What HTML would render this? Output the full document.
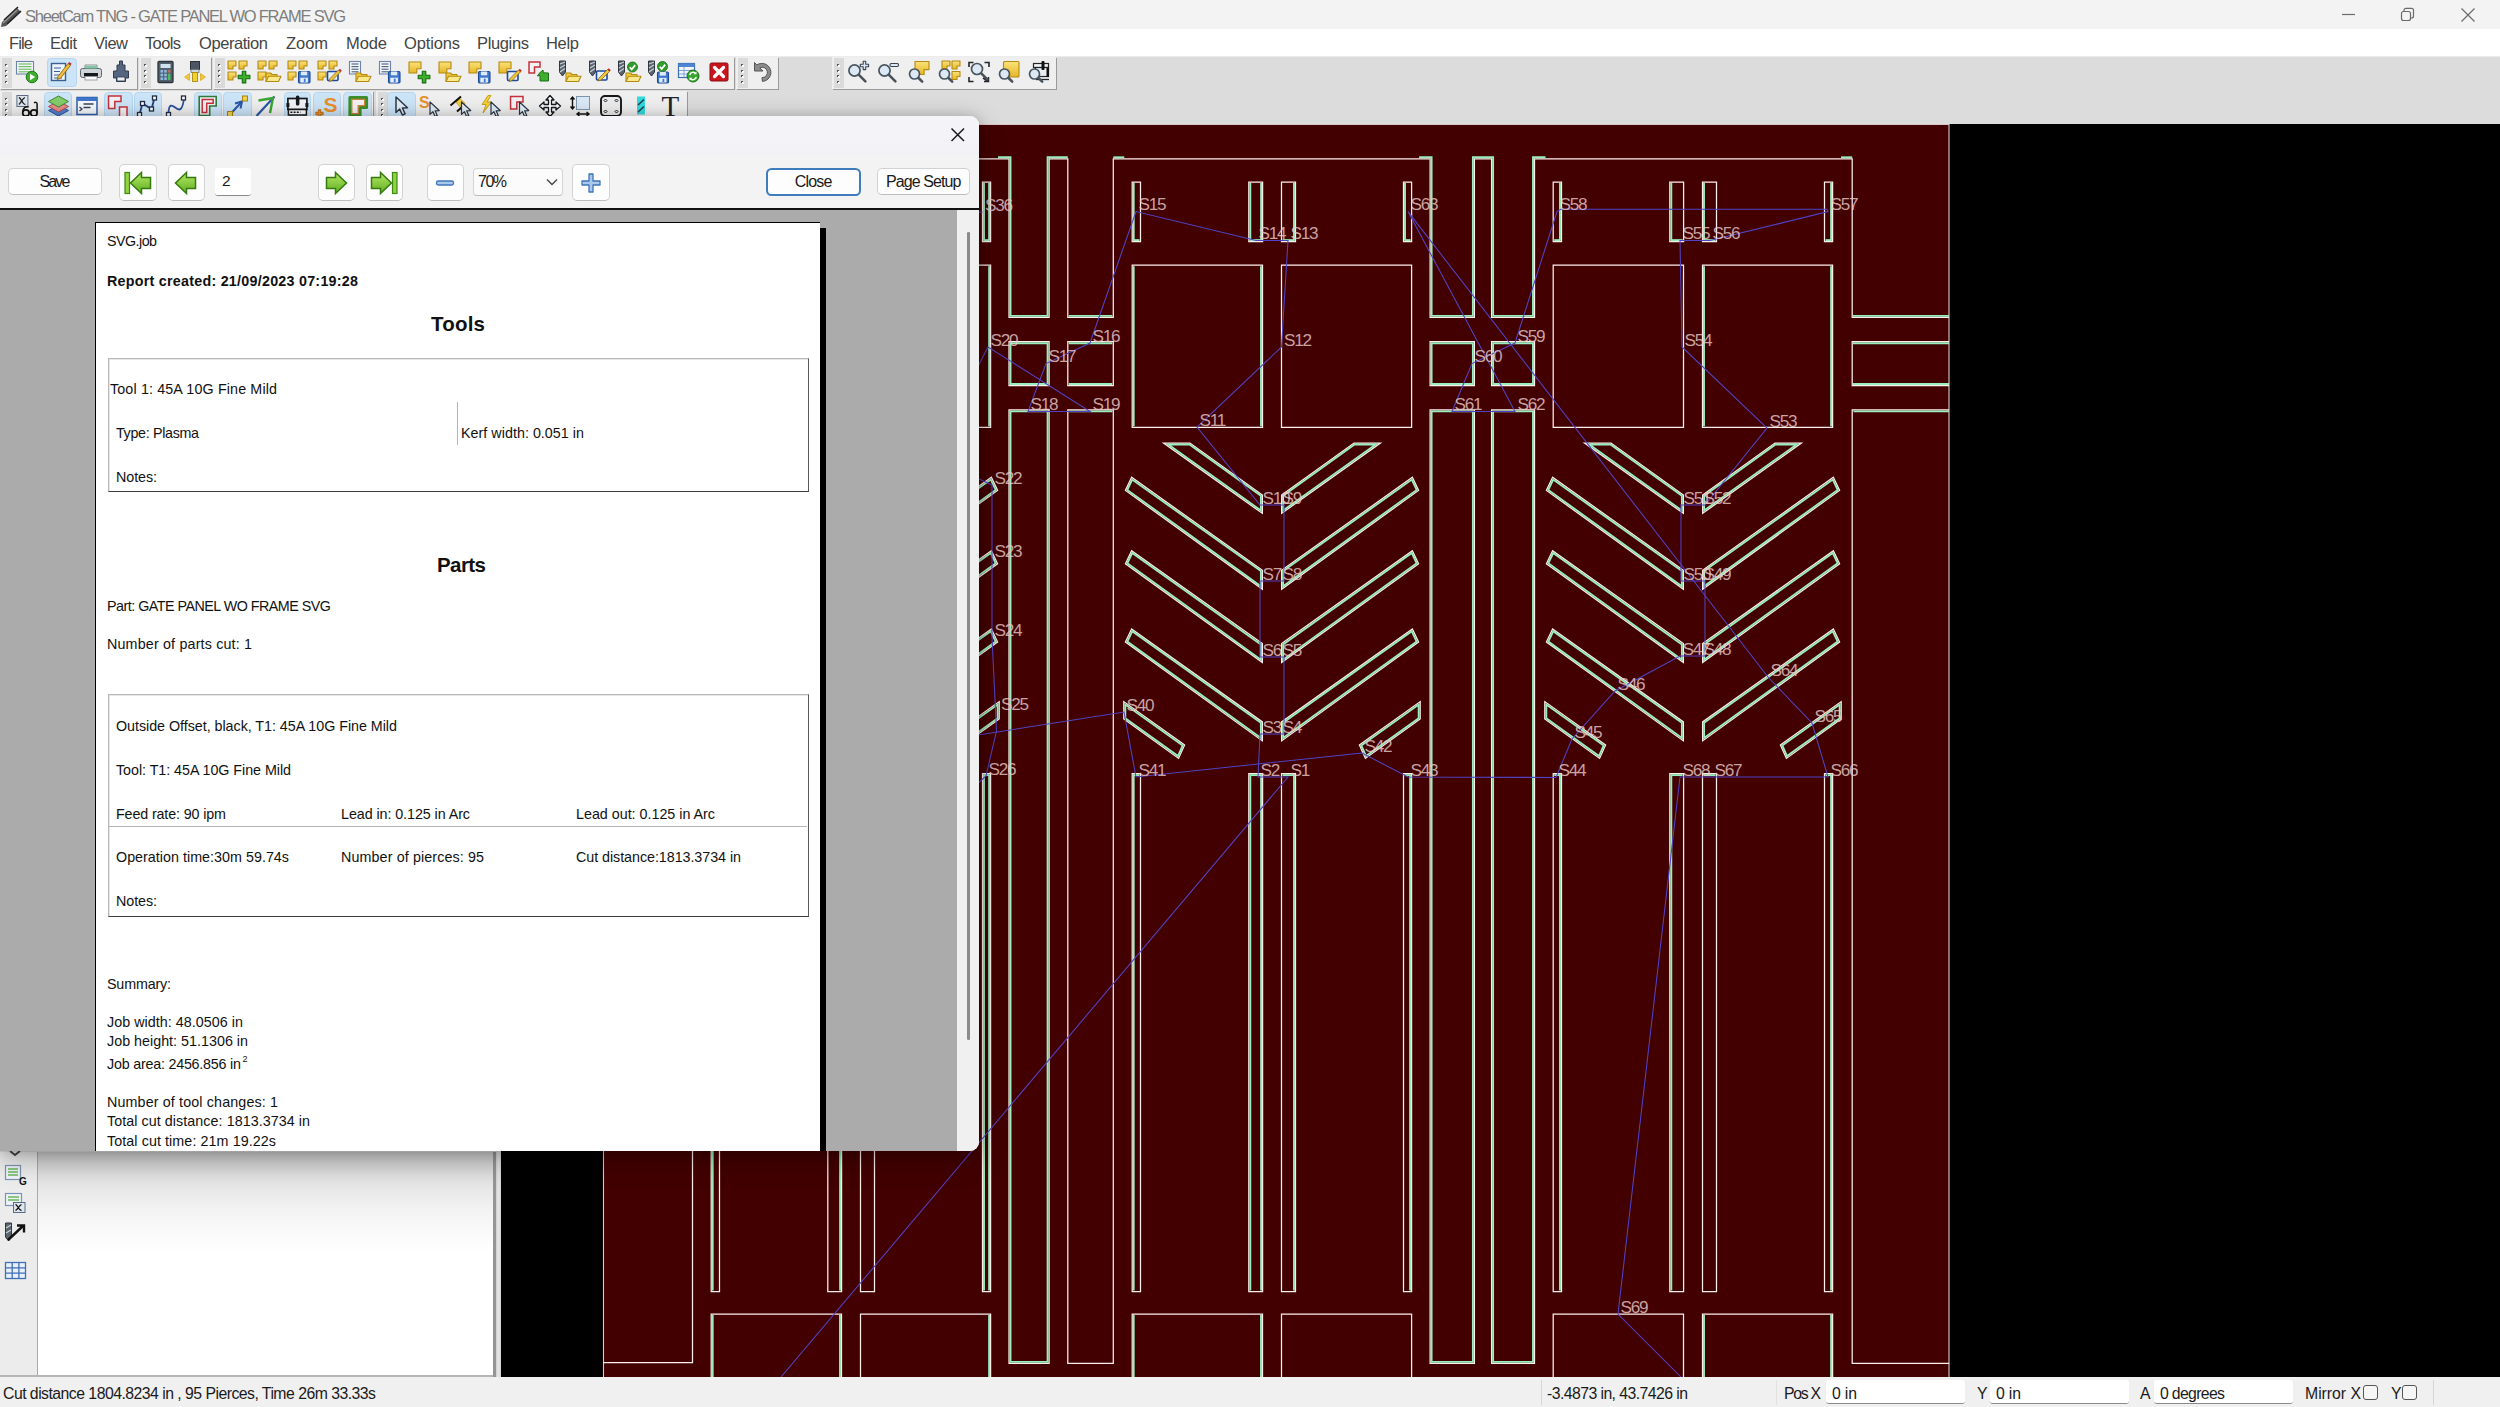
<!DOCTYPE html><html><head><meta charset="utf-8"><title>SheetCam TNG</title><style>
html,body{margin:0;padding:0;background:#dcdcdc}
body{width:2500px;height:1407px;position:relative;overflow:hidden;font-family:"Liberation Sans",sans-serif}
.t{position:absolute;white-space:pre;line-height:1}
</style></head><body>

<div style="position:absolute;left:0.00px;top:0.00px;width:2500.00px;height:29.00px;background:#f3f3f3"></div>
<svg style="position:absolute;left:0;top:3px" width="24" height="24" viewBox="0 0 24 24"><path d="M2 19 L17 5 L21 9 L6 23 L1 24 Z" fill="#555"/><path d="M4 17 L18 4 M7 21 L21 8" stroke="#222" stroke-width="1.5"/><path d="M3 20 L17 7" stroke="#999" stroke-width="1.2"/></svg>
<span class="t" style="left:25.00px;top:7.53px;font-size:16.50px;letter-spacing:-1.244px;color:#7d7d7d;">SheetCam TNG - GATE PANEL WO FRAME SVG</span>
<svg style="position:absolute;left:2330px;top:0" width="170" height="29" viewBox="0 0 170 29" fill="none" stroke="#6a6a6a" stroke-width="1.2"><path d="M12 14.5h13"/><rect x="71.5" y="11.5" width="9" height="9" rx="2"/><path d="M74 11.5v-1.2a2 2 0 0 1 2-2h5.5a2 2 0 0 1 2 2v5.7a2 2 0 0 1-2 2h-1"/><path d="M131.5 8.5l13 13M144.500 8.5l-13 13"/></svg>
<div style="position:absolute;left:0.00px;top:29.00px;width:2500.00px;height:27.00px;background:#fff"></div>
<span class="t" style="left:9.00px;top:34.63px;font-size:16.50px;letter-spacing:-0.862px;color:#444;">File</span>
<span class="t" style="left:50.00px;top:34.63px;font-size:16.50px;letter-spacing:-0.477px;color:#444;">Edit</span>
<span class="t" style="left:94.00px;top:34.63px;font-size:16.50px;letter-spacing:-0.488px;color:#444;">View</span>
<span class="t" style="left:145.00px;top:34.63px;font-size:16.50px;letter-spacing:-0.629px;color:#444;">Tools</span>
<span class="t" style="left:199.00px;top:34.63px;font-size:16.50px;letter-spacing:-0.432px;color:#444;">Operation</span>
<span class="t" style="left:286.00px;top:34.63px;font-size:16.50px;letter-spacing:-0.058px;color:#444;">Zoom</span>
<span class="t" style="left:346.00px;top:34.63px;font-size:16.50px;letter-spacing:-0.090px;color:#444;">Mode</span>
<span class="t" style="left:404.00px;top:34.63px;font-size:16.50px;letter-spacing:-0.143px;color:#444;">Options</span>
<span class="t" style="left:477.00px;top:34.63px;font-size:16.50px;letter-spacing:-0.352px;color:#444;">Plugins</span>
<span class="t" style="left:546.00px;top:34.63px;font-size:16.50px;letter-spacing:-0.311px;color:#444;">Help</span>
<div style="position:absolute;left:0.00px;top:56.00px;width:2500.00px;height:68.00px;background:#dcdcdc"></div>
<div style="position:absolute;left:0.00px;top:55.50px;width:2500.00px;height:1.50px;background:#ececec"></div>
<div style="position:absolute;left:0.00px;top:57.00px;width:137.00px;height:31.50px;background:#efefef;box-shadow:1px 1px 0 #9a9a9a"></div><div style="position:absolute;left:2.00px;top:58.00px;width:10.00px;height:29.50px;background:#dadada"></div><div style="position:absolute;left:5.00px;top:64.00px;width:2.20px;height:2.20px;background:#555"></div><div style="position:absolute;left:6.00px;top:65.00px;width:2.00px;height:2.00px;background:#fff"></div><div style="position:absolute;left:5.00px;top:69.50px;width:2.20px;height:2.20px;background:#555"></div><div style="position:absolute;left:6.00px;top:70.50px;width:2.00px;height:2.00px;background:#fff"></div><div style="position:absolute;left:5.00px;top:75.00px;width:2.20px;height:2.20px;background:#555"></div><div style="position:absolute;left:6.00px;top:76.00px;width:2.00px;height:2.00px;background:#fff"></div><div style="position:absolute;left:5.00px;top:80.50px;width:2.20px;height:2.20px;background:#555"></div><div style="position:absolute;left:6.00px;top:81.50px;width:2.00px;height:2.00px;background:#fff"></div>
<div style="position:absolute;left:139.00px;top:57.00px;width:72.00px;height:31.50px;background:#efefef;box-shadow:1px 1px 0 #9a9a9a"></div><div style="position:absolute;left:141.00px;top:58.00px;width:10.00px;height:29.50px;background:#dadada"></div><div style="position:absolute;left:144.00px;top:64.00px;width:2.20px;height:2.20px;background:#555"></div><div style="position:absolute;left:145.00px;top:65.00px;width:2.00px;height:2.00px;background:#fff"></div><div style="position:absolute;left:144.00px;top:69.50px;width:2.20px;height:2.20px;background:#555"></div><div style="position:absolute;left:145.00px;top:70.50px;width:2.00px;height:2.00px;background:#fff"></div><div style="position:absolute;left:144.00px;top:75.00px;width:2.20px;height:2.20px;background:#555"></div><div style="position:absolute;left:145.00px;top:76.00px;width:2.00px;height:2.00px;background:#fff"></div><div style="position:absolute;left:144.00px;top:80.50px;width:2.20px;height:2.20px;background:#555"></div><div style="position:absolute;left:145.00px;top:81.50px;width:2.00px;height:2.00px;background:#fff"></div>
<div style="position:absolute;left:213.00px;top:57.00px;width:521.00px;height:31.50px;background:#efefef;box-shadow:1px 1px 0 #9a9a9a"></div><div style="position:absolute;left:215.00px;top:58.00px;width:10.00px;height:29.50px;background:#dadada"></div><div style="position:absolute;left:218.00px;top:64.00px;width:2.20px;height:2.20px;background:#555"></div><div style="position:absolute;left:219.00px;top:65.00px;width:2.00px;height:2.00px;background:#fff"></div><div style="position:absolute;left:218.00px;top:69.50px;width:2.20px;height:2.20px;background:#555"></div><div style="position:absolute;left:219.00px;top:70.50px;width:2.00px;height:2.00px;background:#fff"></div><div style="position:absolute;left:218.00px;top:75.00px;width:2.20px;height:2.20px;background:#555"></div><div style="position:absolute;left:219.00px;top:76.00px;width:2.00px;height:2.00px;background:#fff"></div><div style="position:absolute;left:218.00px;top:80.50px;width:2.20px;height:2.20px;background:#555"></div><div style="position:absolute;left:219.00px;top:81.50px;width:2.00px;height:2.00px;background:#fff"></div>
<div style="position:absolute;left:736.00px;top:57.00px;width:42.00px;height:31.50px;background:#efefef;box-shadow:1px 1px 0 #9a9a9a"></div><div style="position:absolute;left:738.00px;top:58.00px;width:10.00px;height:29.50px;background:#dadada"></div><div style="position:absolute;left:741.00px;top:64.00px;width:2.20px;height:2.20px;background:#555"></div><div style="position:absolute;left:742.00px;top:65.00px;width:2.00px;height:2.00px;background:#fff"></div><div style="position:absolute;left:741.00px;top:69.50px;width:2.20px;height:2.20px;background:#555"></div><div style="position:absolute;left:742.00px;top:70.50px;width:2.00px;height:2.00px;background:#fff"></div><div style="position:absolute;left:741.00px;top:75.00px;width:2.20px;height:2.20px;background:#555"></div><div style="position:absolute;left:742.00px;top:76.00px;width:2.00px;height:2.00px;background:#fff"></div><div style="position:absolute;left:741.00px;top:80.50px;width:2.20px;height:2.20px;background:#555"></div><div style="position:absolute;left:742.00px;top:81.50px;width:2.00px;height:2.00px;background:#fff"></div>
<div style="position:absolute;left:832.00px;top:57.00px;width:223.50px;height:31.50px;background:#efefef;box-shadow:1px 1px 0 #9a9a9a"></div><div style="position:absolute;left:834.00px;top:58.00px;width:10.00px;height:29.50px;background:#dadada"></div><div style="position:absolute;left:837.00px;top:64.00px;width:2.20px;height:2.20px;background:#555"></div><div style="position:absolute;left:838.00px;top:65.00px;width:2.00px;height:2.00px;background:#fff"></div><div style="position:absolute;left:837.00px;top:69.50px;width:2.20px;height:2.20px;background:#555"></div><div style="position:absolute;left:838.00px;top:70.50px;width:2.00px;height:2.00px;background:#fff"></div><div style="position:absolute;left:837.00px;top:75.00px;width:2.20px;height:2.20px;background:#555"></div><div style="position:absolute;left:838.00px;top:76.00px;width:2.00px;height:2.00px;background:#fff"></div><div style="position:absolute;left:837.00px;top:80.50px;width:2.20px;height:2.20px;background:#555"></div><div style="position:absolute;left:838.00px;top:81.50px;width:2.00px;height:2.00px;background:#fff"></div>
<div style="position:absolute;left:0.00px;top:90.50px;width:373.00px;height:32.50px;background:#efefef;box-shadow:1px 1px 0 #9a9a9a"></div><div style="position:absolute;left:2.00px;top:91.50px;width:10.00px;height:30.50px;background:#dadada"></div><div style="position:absolute;left:5.00px;top:97.50px;width:2.20px;height:2.20px;background:#555"></div><div style="position:absolute;left:6.00px;top:98.50px;width:2.00px;height:2.00px;background:#fff"></div><div style="position:absolute;left:5.00px;top:103.00px;width:2.20px;height:2.20px;background:#555"></div><div style="position:absolute;left:6.00px;top:104.00px;width:2.00px;height:2.00px;background:#fff"></div><div style="position:absolute;left:5.00px;top:108.50px;width:2.20px;height:2.20px;background:#555"></div><div style="position:absolute;left:6.00px;top:109.50px;width:2.00px;height:2.00px;background:#fff"></div><div style="position:absolute;left:5.00px;top:114.00px;width:2.20px;height:2.20px;background:#555"></div><div style="position:absolute;left:6.00px;top:115.00px;width:2.00px;height:2.00px;background:#fff"></div>
<div style="position:absolute;left:376.00px;top:90.50px;width:310.50px;height:32.50px;background:#efefef;box-shadow:1px 1px 0 #9a9a9a"></div><div style="position:absolute;left:378.00px;top:91.50px;width:10.00px;height:30.50px;background:#dadada"></div><div style="position:absolute;left:381.00px;top:97.50px;width:2.20px;height:2.20px;background:#555"></div><div style="position:absolute;left:382.00px;top:98.50px;width:2.00px;height:2.00px;background:#fff"></div><div style="position:absolute;left:381.00px;top:103.00px;width:2.20px;height:2.20px;background:#555"></div><div style="position:absolute;left:382.00px;top:104.00px;width:2.00px;height:2.00px;background:#fff"></div><div style="position:absolute;left:381.00px;top:108.50px;width:2.20px;height:2.20px;background:#555"></div><div style="position:absolute;left:382.00px;top:109.50px;width:2.00px;height:2.00px;background:#fff"></div><div style="position:absolute;left:381.00px;top:114.00px;width:2.20px;height:2.20px;background:#555"></div><div style="position:absolute;left:382.00px;top:115.00px;width:2.00px;height:2.00px;background:#fff"></div>
<div style="position:absolute;left:47.00px;top:58.00px;width:29.70px;height:29.00px;background:#cce4f7;border:1px solid #b5d6f0;border-radius:4px;box-sizing:border-box"></div>
<div style="position:absolute;left:43.70px;top:91.50px;width:28.30px;height:30.00px;background:#cce4f7;border:1px solid #b5d6f0;border-radius:4px;box-sizing:border-box"></div>
<div style="position:absolute;left:103.60px;top:91.50px;width:29.10px;height:30.00px;background:#cce4f7;border:1px solid #b5d6f0;border-radius:4px;box-sizing:border-box"></div>
<div style="position:absolute;left:133.80px;top:91.50px;width:28.60px;height:30.00px;background:#cce4f7;border:1px solid #b5d6f0;border-radius:4px;box-sizing:border-box"></div>
<div style="position:absolute;left:193.70px;top:91.50px;width:28.00px;height:30.00px;background:#cce4f7;border:1px solid #b5d6f0;border-radius:4px;box-sizing:border-box"></div>
<div style="position:absolute;left:223.00px;top:91.50px;width:29.00px;height:30.00px;background:#cce4f7;border:1px solid #b5d6f0;border-radius:4px;box-sizing:border-box"></div>
<div style="position:absolute;left:283.60px;top:91.50px;width:27.40px;height:30.00px;background:#cce4f7;border:1px solid #b5d6f0;border-radius:4px;box-sizing:border-box"></div>
<div style="position:absolute;left:312.70px;top:91.50px;width:28.00px;height:30.00px;background:#cce4f7;border:1px solid #b5d6f0;border-radius:4px;box-sizing:border-box"></div>
<div style="position:absolute;left:343.00px;top:91.50px;width:29.00px;height:30.00px;background:#cce4f7;border:1px solid #b5d6f0;border-radius:4px;box-sizing:border-box"></div>
<div style="position:absolute;left:387.00px;top:91.50px;width:28.70px;height:30.00px;background:#cce4f7;border:1px solid #b5d6f0;border-radius:4px;box-sizing:border-box"></div>
<svg style="position:absolute;left:0;top:56px" width="1100" height="68" viewBox="0 56 1100 68"><defs><linearGradient id="yg" x1="0" y1="0" x2="0" y2="1"><stop offset="0" stop-color="#fbe27a"/><stop offset="1" stop-color="#e6b625"/></linearGradient></defs>
<g transform="translate(16.0,60)"><rect x="0.5" y="1.5" width="17.0" height="12.5" fill="#f4f7fb" stroke="#6d84a8" stroke-width="1.1"/><path d="M2.5 4.0h13.0" stroke="#6bb85a" stroke-width="1.1"/><path d="M2.5 6.6h13.0" stroke="#6bb85a" stroke-width="1.1"/><path d="M2.5 9.2h13.0" stroke="#6bb85a" stroke-width="1.1"/><path d="M2.5 11.8h13.0" stroke="#6bb85a" stroke-width="1.1"/><circle cx="16" cy="17" r="5.800" fill="#3fae2f" stroke="#1f7a18" stroke-width="1"/><path d="M14 13.800v6.400l5.200-3.200z" fill="#fff"/></g>
<g transform="translate(49.0,60)"><rect x="2.500" y="3.500" width="14" height="17" fill="#eef4fb" stroke="#3b5f8f" stroke-width="1.4"/><path d="M5 8h7M5 11.500h6M5 15h5M5 18h8" stroke="#3b5f8f" stroke-width="1.2"/><path d="M9 16.500L19 3.500l2.500 1.800L11.500 18.300l-3.200 1.200z" fill="#f1bf3a" stroke="#8a6512" stroke-width=".9"/><path d="M19 3.500l1.200-1.600 2.500 1.800-1.200 1.600z" fill="#c62a30"/></g>
<g transform="translate(79.0,60)"><path d="M6 9V5h12v4" fill="#eef3ee" stroke="#8a9096" stroke-width="1"/><rect x="1.500" y="8.500" width="21" height="9" rx="2" fill="#cfd4d8" stroke="#5d646b" stroke-width="1"/><rect x="6" y="6" width="12" height="2.500" fill="#7fc4a4"/><rect x="5" y="13" width="14" height="3.500" fill="#15181b"/><rect x="6" y="16.500" width="12" height="3.500" fill="#fafafa" stroke="#8a9096" stroke-width=".8"/></g>
<g transform="translate(109.0,60)"><path d="M10.500 1h3v4h2.500v6h3.500v7h-3v3.500h-9V18h-3v-7h3.500V5h2.500z" fill="#56657f" stroke="#2f3b50" stroke-width="1" stroke-linejoin="round"/><rect x="8" y="17" width="8" height="4" fill="#e9edf3" stroke="#2f3b50" stroke-width=".8"/></g>
<g transform="translate(153.5,60)"><rect x="4.500" y="1.500" width="15" height="21" rx="1" fill="#51606d" stroke="#2b343c" stroke-width="1.3"/><rect x="7" y="4" width="10" height="4" fill="#cfe0ee"/><g fill="#8db9e6"><rect x="7" y="10" width="2.600" height="2.600"/><rect x="10.700" y="10" width="2.600" height="2.600"/><rect x="7" y="13.700" width="2.600" height="2.600"/><rect x="10.700" y="13.700" width="2.600" height="2.600"/><rect x="7" y="17.400" width="2.600" height="2.600"/><rect x="10.700" y="17.400" width="2.600" height="2.600"/></g><rect x="14.400" y="10" width="2.600" height="2.600" fill="#c86a5a"/><rect x="14.400" y="13.700" width="2.600" height="6.300" fill="#4fb85a"/></g>
<g transform="translate(183.0,60)"><rect x="7.500" y="1.500" width="9" height="8" fill="#4d5763" stroke="#2b333b" stroke-width="1"/><rect x="8" y="9.500" width="8" height="3" fill="#cfd6dd" stroke="#6b747d" stroke-width=".8"/><rect x="9.500" y="12.500" width="5" height="9" fill="#f3d22e" stroke="#a98a10" stroke-width=".9"/><path d="M6.500 13.500v7l-5-3.500zM17.500 13.500v7l5-3.500z" fill="#f1c83a" stroke="#d9a91c" stroke-width=".8"/></g>
<g transform="translate(227.0,60)"><path d="M1.0 1.0h8.0v5.0h-3.0v3.0h-5.0z" fill="url(#yg)" stroke="#b38a12" stroke-width="1.1" stroke-linejoin="round"/><path d="M12.0 1.0h8.0v5.0h-3.0v3.0h-5.0z" fill="url(#yg)" stroke="#b38a12" stroke-width="1.1" stroke-linejoin="round"/><path d="M1.0 12.0h8.0v5.0h-3.0v3.0h-5.0z" fill="url(#yg)" stroke="#b38a12" stroke-width="1.1" stroke-linejoin="round"/><path d="M15.3 11.2h3.5v4.1h4.1v3.5h-4.1v4.1h-3.5v-4.1h-4.1v-3.5h4.1z" fill="#3cb02a" stroke="#176b10" stroke-width="1.1" stroke-linejoin="round"/></g>
<g transform="translate(257.0,60)"><path d="M1.0 1.0h8.0v5.0h-3.0v3.0h-5.0z" fill="url(#yg)" stroke="#b38a12" stroke-width="1.1" stroke-linejoin="round"/><path d="M12.0 1.0h8.0v5.0h-3.0v3.0h-5.0z" fill="url(#yg)" stroke="#b38a12" stroke-width="1.1" stroke-linejoin="round"/><path d="M1.0 12.0h8.0v5.0h-3.0v3.0h-5.0z" fill="url(#yg)" stroke="#b38a12" stroke-width="1.1" stroke-linejoin="round"/><g transform="translate(8.5,11.5)"><path d="M0.500 10.0V1.500h4.500l1.500 1.500h5.0v2.500" fill="#f1c93c" stroke="#b38a12" stroke-width="1.1" stroke-linejoin="round"/><path d="M0.500 10.0L3 4.8h12.5l-2.500 5.2z" fill="#fbe88a" stroke="#b38a12" stroke-width="1.1" stroke-linejoin="round"/></g></g>
<g transform="translate(287.0,60)"><path d="M1.0 1.0h8.0v5.0h-3.0v3.0h-5.0z" fill="url(#yg)" stroke="#b38a12" stroke-width="1.1" stroke-linejoin="round"/><path d="M12.0 1.0h8.0v5.0h-3.0v3.0h-5.0z" fill="url(#yg)" stroke="#b38a12" stroke-width="1.1" stroke-linejoin="round"/><path d="M1.0 12.0h8.0v5.0h-3.0v3.0h-5.0z" fill="url(#yg)" stroke="#b38a12" stroke-width="1.1" stroke-linejoin="round"/><g transform="translate(11.0,11.0)"><rect x="0.500" y="0.500" width="11.5" height="11.5" rx="1.2" fill="#3e78cf" stroke="#1d4a96" stroke-width="1.1"/><rect x="2.9" y="0.500" width="6.3" height="3.8" fill="#dfe9f7"/><rect x="2.3" y="6.7" width="7.6" height="4.8" fill="#e8eef8"/><rect x="5.8" y="7.6" width="1.8" height="3.4" fill="#3e78cf"/></g></g>
<g transform="translate(317.0,60)"><path d="M1.0 1.0h8.0v5.0h-3.0v3.0h-5.0z" fill="url(#yg)" stroke="#b38a12" stroke-width="1.1" stroke-linejoin="round"/><path d="M12.0 1.0h8.0v5.0h-3.0v3.0h-5.0z" fill="url(#yg)" stroke="#b38a12" stroke-width="1.1" stroke-linejoin="round"/><path d="M1.0 12.0h8.0v5.0h-3.0v3.0h-5.0z" fill="url(#yg)" stroke="#b38a12" stroke-width="1.1" stroke-linejoin="round"/><g transform="translate(10.0,8.5)"><rect x="0.500" y="3" width="10.5" height="9.0" rx="1" fill="#e8f0fb" stroke="#1d4a96" stroke-width="1.6"/><path d="M3 10.0L11.5 1.500l2 2L5 12.0l-2.800 1z" fill="#f2c23a" stroke="#8a6a10" stroke-width=".8"/><path d="M11.5 1.500l1.300-1.300 2 2-1.300 1.300z" fill="#c8242b"/></g></g>
<g transform="translate(347.0,60)"><rect x="2.5" y="1.5" width="11.0" height="12.5" fill="#f4f7fb" stroke="#6d84a8" stroke-width="1.1"/><path d="M4.5 4.0h7.0" stroke="#4a5d7a" stroke-width="1.1"/><path d="M4.5 6.6h7.0" stroke="#4a5d7a" stroke-width="1.1"/><path d="M4.5 9.2h7.0" stroke="#4a5d7a" stroke-width="1.1"/><path d="M4.5 11.8h7.0" stroke="#4a5d7a" stroke-width="1.1"/><g transform="translate(8.5,11.5)"><path d="M0.500 10.0V1.500h4.500l1.500 1.500h5.0v2.500" fill="#f1c93c" stroke="#b38a12" stroke-width="1.1" stroke-linejoin="round"/><path d="M0.500 10.0L3 4.8h12.5l-2.500 5.2z" fill="#fbe88a" stroke="#b38a12" stroke-width="1.1" stroke-linejoin="round"/></g></g>
<g transform="translate(377.0,60)"><rect x="2.5" y="1.5" width="11.0" height="12.5" fill="#f4f7fb" stroke="#6d84a8" stroke-width="1.1"/><path d="M4.5 4.0h7.0" stroke="#4a5d7a" stroke-width="1.1"/><path d="M4.5 6.6h7.0" stroke="#4a5d7a" stroke-width="1.1"/><path d="M4.5 9.2h7.0" stroke="#4a5d7a" stroke-width="1.1"/><path d="M4.5 11.8h7.0" stroke="#4a5d7a" stroke-width="1.1"/><g transform="translate(11.0,11.0)"><rect x="0.500" y="0.500" width="11.5" height="11.5" rx="1.2" fill="#3e78cf" stroke="#1d4a96" stroke-width="1.1"/><rect x="2.9" y="0.500" width="6.3" height="3.8" fill="#dfe9f7"/><rect x="2.3" y="6.7" width="7.6" height="4.8" fill="#e8eef8"/><rect x="5.8" y="7.6" width="1.8" height="3.4" fill="#3e78cf"/></g></g>
<g transform="translate(407.0,60)"><path d="M2.0 2.0h12.0v6.8h-4.2v4.2h-7.8z" fill="url(#yg)" stroke="#b38a12" stroke-width="1.1" stroke-linejoin="round"/><path d="M15.3 11.2h3.5v4.1h4.1v3.5h-4.1v4.1h-3.5v-4.1h-4.1v-3.5h4.1z" fill="#3cb02a" stroke="#176b10" stroke-width="1.1" stroke-linejoin="round"/></g>
<g transform="translate(437.0,60)"><path d="M2.0 2.0h12.0v6.8h-4.2v4.2h-7.8z" fill="url(#yg)" stroke="#b38a12" stroke-width="1.1" stroke-linejoin="round"/><g transform="translate(8.5,11.5)"><path d="M0.500 10.0V1.500h4.500l1.500 1.500h5.0v2.500" fill="#f1c93c" stroke="#b38a12" stroke-width="1.1" stroke-linejoin="round"/><path d="M0.500 10.0L3 4.8h12.5l-2.500 5.2z" fill="#fbe88a" stroke="#b38a12" stroke-width="1.1" stroke-linejoin="round"/></g></g>
<g transform="translate(467.0,60)"><path d="M2.0 2.0h12.0v6.8h-4.2v4.2h-7.8z" fill="url(#yg)" stroke="#b38a12" stroke-width="1.1" stroke-linejoin="round"/><g transform="translate(11.0,11.0)"><rect x="0.500" y="0.500" width="11.5" height="11.5" rx="1.2" fill="#3e78cf" stroke="#1d4a96" stroke-width="1.1"/><rect x="2.9" y="0.500" width="6.3" height="3.8" fill="#dfe9f7"/><rect x="2.3" y="6.7" width="7.6" height="4.8" fill="#e8eef8"/><rect x="5.8" y="7.6" width="1.8" height="3.4" fill="#3e78cf"/></g></g>
<g transform="translate(497.0,60)"><path d="M2.0 2.0h12.0v6.8h-4.2v4.2h-7.8z" fill="url(#yg)" stroke="#b38a12" stroke-width="1.1" stroke-linejoin="round"/><g transform="translate(10.0,8.5)"><rect x="0.500" y="3" width="10.5" height="9.0" rx="1" fill="#e8f0fb" stroke="#1d4a96" stroke-width="1.6"/><path d="M3 10.0L11.5 1.500l2 2L5 12.0l-2.800 1z" fill="#f2c23a" stroke="#8a6a10" stroke-width=".8"/><path d="M11.5 1.500l1.300-1.300 2 2-1.300 1.300z" fill="#c8242b"/></g></g>
<g transform="translate(527.0,60)"><path d="M2.0 2.0h11.0v5.0h-5.5v6.1h-5.5z" fill="#f4f1f5" stroke="#c5323a" stroke-width="1.5" stroke-linejoin="miter"/><path d="M12 13.500l4-3.500.3 2.800 5.200.2v8h-8.500v-5.500l-2.500.5z" fill="#3fae2f" stroke="#1c6e16" stroke-width="1" stroke-linejoin="round"/></g>
<g transform="translate(557.0,60)"><g transform="translate(2.0,1.0)"><path d="M0.500 0v11l3 4 3-4V0z" fill="#5b6570" stroke="#2d343c" stroke-width="1"/><path d="M1 3l5-2M1 7l5-3M1 11l5-3.500" stroke="#c9d2da" stroke-width="1.2"/></g><g transform="translate(8.5,11.5)"><path d="M0.500 10.0V1.500h4.500l1.500 1.500h5.0v2.500" fill="#f1c93c" stroke="#b38a12" stroke-width="1.1" stroke-linejoin="round"/><path d="M0.500 10.0L3 4.8h12.5l-2.500 5.2z" fill="#fbe88a" stroke="#b38a12" stroke-width="1.1" stroke-linejoin="round"/></g></g>
<g transform="translate(587.0,60)"><g transform="translate(2.0,1.0)"><path d="M0.500 0v11l3 4 3-4V0z" fill="#5b6570" stroke="#2d343c" stroke-width="1"/><path d="M1 3l5-2M1 7l5-3M1 11l5-3.500" stroke="#c9d2da" stroke-width="1.2"/></g><g transform="translate(9.0,8.0)"><rect x="0.500" y="3" width="10.5" height="9.0" rx="1" fill="#e8f0fb" stroke="#1d4a96" stroke-width="1.6"/><path d="M3 10.0L11.5 1.500l2 2L5 12.0l-2.800 1z" fill="#f2c23a" stroke="#8a6a10" stroke-width=".8"/><path d="M11.5 1.500l1.300-1.300 2 2-1.300 1.300z" fill="#c8242b"/></g></g>
<g transform="translate(617.0,60)"><g transform="translate(1.0,1.0)"><path d="M0.500 0v11l3 4 3-4V0z" fill="#5b6570" stroke="#2d343c" stroke-width="1"/><path d="M1 3l5-2M1 7l5-3M1 11l5-3.500" stroke="#c9d2da" stroke-width="1.2"/></g><g transform="translate(8.5,11.5)"><path d="M0.500 10.0V1.500h4.500l1.500 1.500h5.0v2.500" fill="#f1c93c" stroke="#b38a12" stroke-width="1.1" stroke-linejoin="round"/><path d="M0.500 10.0L3 4.8h12.5l-2.500 5.2z" fill="#fbe88a" stroke="#b38a12" stroke-width="1.1" stroke-linejoin="round"/></g><circle cx="15.5" cy="7.0" r="5.0" fill="#2f9e2a" stroke="#166a14" stroke-width=".8"/><path d="M12.7 7.2l2 2.200 3.500-4.300" fill="none" stroke="#fff" stroke-width="1.7"/></g>
<g transform="translate(647.0,60)"><g transform="translate(1.0,1.0)"><path d="M0.500 0v11l3 4 3-4V0z" fill="#5b6570" stroke="#2d343c" stroke-width="1"/><path d="M1 3l5-2M1 7l5-3M1 11l5-3.500" stroke="#c9d2da" stroke-width="1.2"/></g><g transform="translate(10.0,11.5)"><rect x="0.500" y="0.500" width="11.0" height="11.0" rx="1.2" fill="#3e78cf" stroke="#1d4a96" stroke-width="1.1"/><rect x="2.8" y="0.500" width="6.1" height="3.6" fill="#dfe9f7"/><rect x="2.2" y="6.4" width="7.3" height="4.6" fill="#e8eef8"/><rect x="5.5" y="7.3" width="1.8" height="3.3" fill="#3e78cf"/></g><circle cx="15.5" cy="6.5" r="5.0" fill="#2f9e2a" stroke="#166a14" stroke-width=".8"/><path d="M12.7 6.7l2 2.200 3.500-4.300" fill="none" stroke="#fff" stroke-width="1.7"/></g>
<g transform="translate(677.0,60)"><rect x="1.500" y="3.500" width="16" height="14" fill="#f2f6fb" stroke="#3f6fb5" stroke-width="1.2"/><rect x="1.500" y="3.500" width="16" height="3.500" fill="#4f86d4"/><path d="M2 10.500h15M2 14h15M7 7v10" stroke="#7fa3d8" stroke-width="1"/><circle cx="16" cy="16" r="6" fill="#35a52c" stroke="#176a12" stroke-width=".9"/><path d="M12.800 15a3.300 3.300 0 0 1 5.800-1.500M19.200 17a3.300 3.300 0 0 1-5.800 1.500" fill="none" stroke="#fff" stroke-width="1.500"/><path d="M19.500 11.500v2.800h-2.800zM12.500 20.500v-2.800h2.800z" fill="#fff"/></g>
<g transform="translate(707.0,60)"><rect x="3" y="3" width="18" height="18" rx="1.500" fill="#c9161d" stroke="#8e0c12" stroke-width="1"/><path d="M7.500 7.500l9 9M16.500 7.500l-9 9" stroke="#fff" stroke-width="3.200" stroke-linecap="round"/></g>
<g transform="translate(751.0,60)"><path d="M3.500 2.500v8.500h8.500l-3.200-3.200a5.200 5.200 0 1 1 2.200 9.800l.4 3.800a9 9 0 1 0-5.600-16.400z" fill="#8b8b8b" stroke="#555" stroke-width="1" stroke-linejoin="round"/></g>
<g transform="translate(846.0,60)"><path d="M12.4 14.4l7.0 7.0" stroke="#4a535c" stroke-width="2.600" stroke-linecap="round"/><circle cx="8.5" cy="10.5" r="5.6" fill="#dce9f4" stroke="#4a545e" stroke-width="1.7"/><path d="M17.2 1.3h2.5v2.9h2.9v2.5h-2.9v2.9h-2.5v-2.9h-2.9v-2.5h2.9z" fill="#dce9f4" stroke="#3a4550" stroke-width="1.1" stroke-linejoin="round"/></g>
<g transform="translate(876.0,60)"><path d="M12.4 14.4l7.0 7.0" stroke="#4a535c" stroke-width="2.600" stroke-linecap="round"/><circle cx="8.5" cy="10.5" r="5.6" fill="#dce9f4" stroke="#4a545e" stroke-width="1.7"/><rect x="14" y="3.500" width="8.500" height="3" rx="1.200" fill="#dce9f4" stroke="#3a4550" stroke-width="1.100"/></g>
<g transform="translate(907.0,60)"><path d="M8.0 1.5h14.0v8.1h-4.9v4.9h-9.1z" fill="url(#yg)" stroke="#b38a12" stroke-width="1.1" stroke-linejoin="round"/><path d="M11.0 17.5l4.2 4.2" stroke="#4a535c" stroke-width="2.600" stroke-linecap="round"/><circle cx="7.5" cy="14.0" r="5.0" fill="#dce9f4" stroke="#4a545e" stroke-width="1.7"/></g>
<g transform="translate(937.0,60)"><path d="M5.0 1.0h8.0v5.0h-3.0v3.0h-5.0z" fill="url(#yg)" stroke="#b38a12" stroke-width="1.1" stroke-linejoin="round"/><path d="M15.0 1.0h8.0v5.0h-3.0v3.0h-5.0z" fill="url(#yg)" stroke="#b38a12" stroke-width="1.1" stroke-linejoin="round"/><path d="M15.0 11.5h8.0v5.0h-3.0v3.0h-5.0z" fill="url(#yg)" stroke="#b38a12" stroke-width="1.1" stroke-linejoin="round"/><path d="M11.0 17.5l4.2 4.2" stroke="#4a535c" stroke-width="2.600" stroke-linecap="round"/><circle cx="7.5" cy="14.0" r="5.0" fill="#dce9f4" stroke="#4a545e" stroke-width="1.7"/></g>
<g transform="translate(967.0,60)"><path d="M2 7V2.500h4.500M17.500 2.500H22V7M2 17v4.500h4.500" fill="none" stroke="#20262c" stroke-width="1.600"/><path d="M16 18l5.500 3.500M21.500 17v4.500H17" fill="none" stroke="#20262c" stroke-width="1.500"/><path d="M13.8 12.8l6.5 6.5" stroke="#4a535c" stroke-width="2.600" stroke-linecap="round"/><circle cx="10.0" cy="9.0" r="5.5" fill="#dce9f4" stroke="#4a545e" stroke-width="1.7"/></g>
<g transform="translate(997.0,60)"><rect x="6.5" y="1.5" width="15.5" height="15.5" rx="1" fill="url(#yg)" stroke="#b38a12" stroke-width="1.1"/><path d="M11.0 17.5l4.2 4.2" stroke="#4a535c" stroke-width="2.600" stroke-linecap="round"/><circle cx="7.5" cy="14.0" r="5.0" fill="#dce9f4" stroke="#4a545e" stroke-width="1.7"/></g>
<g transform="translate(1027.0,60)"><rect x="6.500" y="3.500" width="15" height="4" fill="#f2f4f6" stroke="#20262c" stroke-width="1.200"/><rect x="8.500" y="7.500" width="13" height="9" fill="#e9edf1" stroke="#20262c" stroke-width="1.200"/><rect x="19.500" y="8" width="2.500" height="9" fill="#111"/><rect x="14.500" y="1" width="3" height="9" rx="1" fill="#111"/><path d="M9 19.500h13" stroke="#20262c" stroke-width="1.300"/><path d="M11.0 17.5l4.2 4.2" stroke="#4a535c" stroke-width="2.600" stroke-linecap="round"/><circle cx="7.5" cy="14.0" r="5.0" fill="#dce9f4" stroke="#4a545e" stroke-width="1.7"/></g>
<g transform="translate(15.4,94)"><rect x="1.500" y="1.500" width="11" height="11" fill="#dfe7f1" stroke="#5b6c84" stroke-width="1"/><path d="M3.500 3.500c2 0 3.500 7 6.500 7M9.500 3.500c-2.500 1-4 5.500-6 7" fill="none" stroke="#222" stroke-width="1.300"/><circle cx="10.500" cy="19" r="3.200" fill="none" stroke="#111" stroke-width="1.700"/><circle cx="18.500" cy="19" r="3.200" fill="none" stroke="#111" stroke-width="1.700"/><path d="M13.500 18.500h2M21.700 19V10c0-2-2-2-3-1M7.300 18c0-4 3-6 6-5" fill="none" stroke="#111" stroke-width="1.500"/></g>
<g transform="translate(46.5,94)"><path d="M12 11l10 5.500-10 5.500-10-5.500z" fill="#4f7fd0" stroke="#2a4f97" stroke-width="1"/><path d="M12 7l10 5.500-10 5.500-10-5.500z" fill="#e98a8a" stroke="#b04a4a" stroke-width="1"/><path d="M12 2l10 5.500-10 5.500-10-5.500z" fill="#84cc6c" stroke="#3d8a2e" stroke-width="1"/></g>
<g transform="translate(75.0,94)"><rect x="2" y="3.500" width="20" height="17" fill="#f4f7fb" stroke="#2f5fae" stroke-width="1.500"/><rect x="2" y="3.500" width="20" height="3.500" fill="#3f76cc"/><path d="M8.500 10h10M8.500 13.500h7" stroke="#39455a" stroke-width="1.400"/><path d="M4.500 13l2.500 2-2.500 2" fill="none" stroke="#39455a" stroke-width="1.300"/></g>
<g transform="translate(106.0,94)"><path d="M2.5 2.0h12.5v5.6h-6.2v6.9h-6.2z" fill="#f4f1f5" stroke="#c5323a" stroke-width="1.5" stroke-linejoin="miter"/><rect x="13.500" y="13" width="7.500" height="10" fill="#f4f1f5" stroke="#c5323a" stroke-width="1.500"/></g>
<g transform="translate(136.0,94)"><path d="M3.500 20.500L6.500 9.500l9 5.500 3-11" fill="none" stroke="#23407a" stroke-width="1.800"/><g fill="#fff" stroke="#1f2c44" stroke-width="1.300"><rect x="1.500" y="18.500" width="4" height="4"/><rect x="4.500" y="7.500" width="4" height="4"/><rect x="13.500" y="13" width="4" height="4"/><rect x="16.500" y="2" width="4" height="4"/></g></g>
<g transform="translate(165.0,94)"><path d="M3.500 20.500c0-14 5-8 8-6s6 2 7.500-10" fill="none" stroke="#2c4f9a" stroke-width="1.800"/><g fill="#fff" stroke="#1f2c44" stroke-width="1.300"><rect x="1.500" y="18.500" width="4" height="4"/><rect x="16.500" y="2" width="4" height="4"/></g></g>
<g transform="translate(195.7,94)"><path d="M3.500 2.500h17v9.500h-6.500v9.500h-10.500z" fill="#eef1f5" stroke="#2f7a3a" stroke-width="1.600"/><path d="M6.500 5.500h11v3.800h-6.500v9.200h-4.500z" fill="#f6f2f4" stroke="#c5323a" stroke-width="1.500"/></g>
<g transform="translate(226.0,94)"><path d="M4.500 20L16 7.500" stroke="#2856a8" stroke-width="2"/><path d="M9 9.500l7-2-1.500 7" fill="none" stroke="#2856a8" stroke-width="2"/><rect x="1.500" y="17.500" width="5" height="5" fill="#f4d24a" stroke="#a78412" stroke-width="1"/><rect x="16.500" y="2" width="5" height="5" fill="#f4d24a" stroke="#a78412" stroke-width="1"/></g>
<g transform="translate(254.5,94)"><path d="M2 22L20 2.500" stroke="#2856a8" stroke-width="2.200"/><path d="M4 6.500l14.500-2.500-3 15" fill="none" stroke="#3aa52e" stroke-width="2.400"/></g>
<g transform="translate(285.4,94)"><rect x="2.500" y="4.500" width="19" height="11" fill="#eef2f6" stroke="#15181c" stroke-width="1.700"/><rect x="3" y="15.500" width="18" height="5.500" fill="#fff" stroke="#15181c" stroke-width="1.500"/><path d="M5 18.300h10" stroke="#15181c" stroke-width="1.500" stroke-dasharray="2 1.200"/><rect x="10.500" y="1.500" width="3.500" height="10" rx="1.500" fill="#15181c"/><path d="M2.500 9v4M21.500 9v4" stroke="#15181c" stroke-width="3"/><path d="M4 22.500h3M17 22.500h3" stroke="#15181c" stroke-width="1.600"/></g>
<g transform="translate(315.0,94)"><text x="8.500" y="18" font-family="Liberation Sans,sans-serif" font-weight="bold" font-size="21" fill="#e8902c">S</text><path d="M3.4 15.9h2.2v2.5h2.5v2.2h-2.5v2.5h-2.2v-2.5h-2.5v-2.2h2.5z" fill="#e8902c" stroke="#c6741a" stroke-width="1.1" stroke-linejoin="round"/></g>
<g transform="translate(346.0,94)"><path d="M4 3.500h16.500v10h-6.500v8h-10z" fill="#f4f2f6" stroke="#3c8f2a" stroke-width="3.200" stroke-linejoin="round"/><path d="M5.800 5.300h12.900v6.400h-6.500v8h-6.400z" fill="none" stroke="#c9823a" stroke-width="1.300"/></g>
<g transform="translate(390.0,94)"><path transform="translate(6.0,3.0) scale(1.15)" d="M0 0v13.5l3.200-3 2.300 5.200 2.400-1.100-2.300-5 4.400-.3z" fill="#e3ebf4" stroke="#2a3848" stroke-width="1.3" stroke-linejoin="round"/></g>
<g transform="translate(419.0,94)"><text x="0" y="13.500" font-family="Liberation Sans,sans-serif" font-weight="bold" font-size="16" fill="#e8902c">S</text><path transform="translate(11.0,8.0) scale(0.92)" d="M0 0v13.5l3.200-3 2.300 5.200 2.400-1.100-2.300-5 4.400-.3z" fill="#e3ebf4" stroke="#2a3848" stroke-width="1.3" stroke-linejoin="round"/></g>
<g transform="translate(449.0,94)"><path d="M7 8l4-3.500 5 5-4.500 4z" fill="#f1cf3c" stroke="#b39412" stroke-width=".8"/><path d="M1.500 11.500L12 2.500M8 17.500l8-7" stroke="#111" stroke-width="2"/><path transform="translate(12.5,8.0) scale(0.92)" d="M0 0v13.5l3.200-3 2.300 5.200 2.400-1.100-2.300-5 4.400-.3z" fill="#e3ebf4" stroke="#2a3848" stroke-width="1.3" stroke-linejoin="round"/></g>
<g transform="translate(479.0,94)"><path d="M9 1.500l-6 9h4l-3 8.500 8.500-11h-4.500l4-6.500z" fill="#f3cf3a" stroke="#c9a21c" stroke-width="1" stroke-linejoin="round"/><path transform="translate(12.0,8.0) scale(0.92)" d="M0 0v13.5l3.200-3 2.300 5.200 2.400-1.100-2.300-5 4.400-.3z" fill="#e3ebf4" stroke="#2a3848" stroke-width="1.3" stroke-linejoin="round"/></g>
<g transform="translate(508.0,94)"><path d="M2.5 2.5h12.5v5.6h-6.2v6.9h-6.2z" fill="#f4f1f5" stroke="#c5323a" stroke-width="1.5" stroke-linejoin="miter"/><path transform="translate(11.5,8.0) scale(0.92)" d="M0 0v13.5l3.200-3 2.300 5.200 2.400-1.100-2.300-5 4.400-.3z" fill="#e3ebf4" stroke="#2a3848" stroke-width="1.3" stroke-linejoin="round"/></g>
<g transform="translate(538.0,94)"><path d="M12 1.500l4 4.500h-2.500v4.500h4.500v-2.500l4.500 4-4.500 4v-2.500h-4.500v4.500h2.500l-4 4.500-4-4.500h2.500v-4.500h-4.500v2.500l-4.500-4 4.500-4v2.500h4.500v-4.500h-2.500z" fill="#fff" stroke="#15181c" stroke-width="1.300" stroke-linejoin="round"/></g>
<g transform="translate(569.0,94)"><rect x="7.500" y="2.500" width="13" height="13" fill="#dbe8f5" stroke="#7f95ad" stroke-width="1"/><path d="M3.500 3.500v11M1.500 5.500l2-2.500 2 2.500M1.500 12.500l2 2.500 2-2.500M8.500 20h11M10.500 18l-2.500 2 2.500 2M17.500 18l2.500 2-2.500 2" fill="none" stroke="#111" stroke-width="1.400"/></g>
<g transform="translate(599.0,94)"><rect x="2" y="2" width="20" height="20" rx="4" fill="#ececec" stroke="#15181c" stroke-width="1.900"/><g fill="none" stroke="#15181c" stroke-width="1"><path d="M6.500 5l1.500 1.500-1.500 1.500-1.500-1.500zM17.500 5l1.500 1.500-1.500 1.500-1.500-1.500zM6.500 16l1.500 1.500-1.500 1.500-1.500-1.500zM17.500 16l1.500 1.500-1.500 1.500-1.500-1.500z"/></g></g>
<g transform="translate(629.0,94)"><rect x="8" y="2.500" width="8" height="18" fill="#35d9de"/><path d="M9 11l6-5.500M9 18l6-5.500" stroke="#21424f" stroke-width="1.600"/></g>
<g transform="translate(659.0,94)"><text x="2.500" y="22" font-family="Liberation Serif,serif" font-size="29" fill="#20242a">T</text></g>
</svg>
<svg style="position:absolute;left:501px;top:124px" width="1999" height="1253" viewBox="501 124 1999 1253">
<style>.w{fill:none;stroke:#ffeeee;stroke-width:1.25}.g{fill:none;stroke:#98eebc;stroke-width:1.9}.b{fill:none;stroke:#5143c6;stroke-width:1.05}.l{font-family:"Liberation Sans",sans-serif;font-size:17.2px;fill:#e9c9c9;letter-spacing:-1.2px;fill-opacity:.82}</style>
<rect x="501" y="124" width="1999" height="1253" fill="#000"/>
<rect x="603" y="124" width="1346" height="1253" fill="#420000"/>
<path d="M603.500 1377V124.4H1949V1377" stroke="#dcc8c8" stroke-width="1.1" fill="none"/>
<polyline class="w" points="692.5,317.4 692.5,158.8 1009.0,158.8 1009.0,317.4 1049.1,317.4 1049.1,158.8 1067.8,158.8 1067.8,317.4 1113.3,317.4 1113.3,158.8 1430.1,158.8 1430.1,317.4 1474.4,317.4 1474.4,158.8 1491.6,158.8 1491.6,317.4 1534.5,317.4 1534.5,158.8 1852.2,158.8 1852.2,317.4 1949.0,317.4"/>
<polyline class="g" points="998.0,157.3 1010.5,157.3 1010.5,315.9 1047.6,315.9 1047.6,157.3 1067.8,157.3"/>
<polyline class="g" points="1068.8,315.9 1112.3,315.9"/>
<polyline class="g" points="1113.3,157.3 1124.3,157.3"/>
<polygon class="w" points="1009.0,341.7 1049.1,341.7 1049.1,385.5 1009.0,385.5"/><polygon class="g" points="1010.5,343.2 1047.6,343.2 1047.6,384.0 1010.5,384.0"/>
<polygon class="w" points="1067.8,341.7 1113.3,341.7 1113.3,385.5 1067.8,385.5"/><polyline class="g" points="1068.8,343.2 1112.3,343.2"/><polyline class="g" points="1068.8,384.0 1112.3,384.0"/>
<polyline class="g" points="1419.1,157.3 1431.6,157.3 1431.6,315.9 1472.9,315.9 1472.9,157.3 1493.1,157.3 1493.1,315.9 1533.0,315.9 1533.0,157.3 1545.5,157.3"/>
<polygon class="w" points="1430.1,341.7 1474.4,341.7 1474.4,385.5 1430.1,385.5"/><polygon class="g" points="1431.6,343.2 1472.9,343.2 1472.9,384.0 1431.6,384.0"/>
<polygon class="w" points="1491.6,341.7 1534.5,341.7 1534.5,385.5 1491.6,385.5"/><polygon class="g" points="1493.1,343.2 1533.0,343.2 1533.0,384.0 1493.1,384.0"/>
<polyline class="g" points="1841.0,157.3 1852.2,157.3"/>
<polyline class="g" points="1853.0,315.9 1949.0,315.9"/>
<polyline class="w" points="1949.0,341.7 1852.2,341.7 1852.2,385.5 1949.0,385.5"/>
<polyline class="g" points="1949.0,343.2 1853.0,343.2"/>
<polyline class="g" points="1853.0,384.0 1949.0,384.0"/>
<polygon class="w" points="1009.0,409.9 1049.1,409.9 1049.1,1363.4 1009.0,1363.4"/><polygon class="g" points="1010.5,411.4 1047.6,411.4 1047.6,1361.9 1010.5,1361.9"/>
<polygon class="w" points="1067.8,409.9 1113.3,409.9 1113.3,1363.4 1067.8,1363.4"/><polyline class="g" points="1068.8,411.4 1112.3,411.4"/>
<polygon class="w" points="1430.1,409.9 1474.4,409.9 1474.4,1363.4 1430.1,1363.4"/><polygon class="g" points="1431.6,411.4 1472.9,411.4 1472.9,1361.9 1431.6,1361.9"/>
<polygon class="w" points="1491.6,409.9 1534.5,409.9 1534.5,1363.4 1491.6,1363.4"/><polygon class="g" points="1493.1,411.4 1533.0,411.4 1533.0,1361.9 1493.1,1361.9"/>
<polyline class="w" points="1949.0,409.9 1852.2,409.9 1852.2,1363.4 1949.0,1363.4"/>
<polyline class="g" points="1949.0,411.4 1853.5,411.4"/>
<polyline class="w" points="603.0,409.9 692.5,409.9 692.5,1362.5 603.0,1362.5"/>
<polygon class="w" points="711.2,182.0 719.5,182.0 719.5,241.6 711.2,241.6"/><polyline class="g" points="712.7,183.0 712.7,240.6"/><polyline class="g" points="718.0,183.0 718.0,240.6"/><polyline class="g" points="712.2,240.1 718.5,240.1"/><polygon class="w" points="711.2,773.6 719.5,773.6 719.5,1291.5 711.2,1291.5"/><polyline class="g" points="712.7,774.6 712.7,1290.5"/><polyline class="g" points="712.2,775.1 718.5,775.1"/><polygon class="w" points="827.8,182.0 841.6,182.0 841.6,241.6 827.8,241.6"/><polyline class="g" points="829.3,183.0 829.3,240.6"/><polyline class="g" points="840.1,183.0 840.1,240.6"/><polyline class="g" points="828.8,240.1 840.6,240.1"/><polygon class="w" points="827.8,773.6 841.6,773.6 841.6,1291.5 827.8,1291.5"/><polyline class="g" points="840.1,774.6 840.1,1290.5"/><polyline class="g" points="828.8,775.1 840.6,775.1"/><polygon class="w" points="860.5,182.0 874.5,182.0 874.5,241.6 860.5,241.6"/><polyline class="g" points="862.0,183.0 862.0,240.6"/><polyline class="g" points="873.0,183.0 873.0,240.6"/><polyline class="g" points="861.5,240.1 873.5,240.1"/><polygon class="w" points="860.5,773.6 874.5,773.6 874.5,1291.5 860.5,1291.5"/><polyline class="g" points="861.5,775.1 873.5,775.1"/><polygon class="w" points="982.5,182.0 990.6,182.0 990.6,241.6 982.5,241.6"/><polyline class="g" points="984.0,183.0 984.0,240.6"/><polyline class="g" points="989.1,183.0 989.1,240.6"/><polyline class="g" points="983.5,240.1 989.6,240.1"/><polygon class="w" points="982.5,773.6 990.6,773.6 990.6,1291.5 982.5,1291.5"/><polyline class="g" points="984.0,774.6 984.0,1290.5"/><polyline class="g" points="989.1,774.6 989.1,1290.5"/><polyline class="g" points="983.5,775.1 989.6,775.1"/><polygon class="w" points="711.2,265.2 841.5,265.2 841.5,427.3 711.2,427.3"/><polyline class="g" points="712.7,266.2 712.7,426.3"/><polyline class="g" points="840.0,266.2 840.0,426.3"/><polygon class="w" points="860.5,265.2 990.6,265.2 990.6,427.3 860.5,427.3"/><polyline class="g" points="989.1,266.2 989.1,426.3"/><polygon class="w" points="711.2,1314.0 841.5,1314.0 841.5,1400.0 711.2,1400.0"/><polyline class="g" points="712.7,1315.0 712.7,1399.0"/><polyline class="g" points="840.0,1315.0 840.0,1399.0"/><polygon class="w" points="860.5,1314.0 990.6,1314.0 990.6,1400.0 860.5,1400.0"/><polyline class="g" points="989.1,1315.0 989.1,1399.0"/><polygon class="w" points="742.6,443.0 769.0,443.0 841.4,495.0 841.4,513.4"/><polygon class="g" points="747.3,444.5 768.5,444.5 839.9,495.8 839.9,510.5"/><polygon class="w" points="710.6,477.3 704.4,490.4 841.4,589.2 841.4,570.2"/><polygon class="g" points="711.2,479.6 706.3,489.9 839.9,586.3 839.9,571.0"/><polygon class="w" points="710.6,550.7 704.4,563.8 841.4,662.6 841.4,643.6"/><polygon class="g" points="711.2,553.0 706.3,563.3 839.9,659.7 839.9,644.4"/><polygon class="w" points="710.6,629.0 704.4,642.1 841.4,740.9 841.4,721.9"/><polygon class="g" points="711.2,631.3 706.3,641.6 839.9,738.0 839.9,722.7"/><polygon class="w" points="702.8,701.6 702.8,719.0 757.6,758.4 763.6,745.0"/><polygon class="g" points="704.3,704.5 704.3,718.2 757.0,756.1 761.7,745.5"/><polygon class="w" points="959.4,443.0 933.0,443.0 860.6,495.0 860.6,513.4"/><polygon class="g" points="954.7,444.5 933.5,444.5 862.1,495.8 862.1,510.5"/><polygon class="w" points="991.4,477.3 997.6,490.4 860.6,589.2 860.6,570.2"/><polygon class="g" points="990.8,479.6 995.7,489.9 862.1,586.3 862.1,571.0"/><polygon class="w" points="991.4,550.7 997.6,563.8 860.6,662.6 860.6,643.6"/><polygon class="g" points="990.8,553.0 995.7,563.3 862.1,659.7 862.1,644.4"/><polygon class="w" points="991.4,629.0 997.6,642.1 860.6,740.9 860.6,721.9"/><polygon class="g" points="990.8,631.3 995.7,641.6 862.1,738.0 862.1,722.7"/><polygon class="w" points="999.2,701.6 999.2,719.0 944.4,758.4 938.4,745.0"/><polygon class="g" points="997.7,704.5 997.7,718.2 945.0,756.1 940.3,745.5"/>
<polygon class="w" points="1132.2,182.0 1140.5,182.0 1140.5,241.6 1132.2,241.6"/><polyline class="g" points="1133.7,183.0 1133.7,240.6"/><polyline class="g" points="1133.2,240.1 1139.5,240.1"/><polygon class="w" points="1132.2,773.6 1140.5,773.6 1140.5,1291.5 1132.2,1291.5"/><polyline class="g" points="1133.7,774.6 1133.7,1290.5"/><polyline class="g" points="1133.2,775.1 1139.5,775.1"/><polygon class="w" points="1248.8,182.0 1262.6,182.0 1262.6,241.6 1248.8,241.6"/><polyline class="g" points="1250.3,183.0 1250.3,240.6"/><polyline class="g" points="1261.1,183.0 1261.1,240.6"/><polyline class="g" points="1249.8,240.1 1261.6,240.1"/><polygon class="w" points="1248.8,773.6 1262.6,773.6 1262.6,1291.5 1248.8,1291.5"/><polyline class="g" points="1250.3,774.6 1250.3,1290.5"/><polyline class="g" points="1261.1,774.6 1261.1,1290.5"/><polyline class="g" points="1249.8,775.1 1261.6,775.1"/><polygon class="w" points="1281.5,182.0 1295.5,182.0 1295.5,241.6 1281.5,241.6"/><polyline class="g" points="1294.0,183.0 1294.0,240.6"/><polyline class="g" points="1282.5,240.1 1294.5,240.1"/><polygon class="w" points="1281.5,773.6 1295.5,773.6 1295.5,1291.5 1281.5,1291.5"/><polyline class="g" points="1294.0,774.6 1294.0,1290.5"/><polyline class="g" points="1282.5,775.1 1294.5,775.1"/><polygon class="w" points="1403.5,182.0 1411.6,182.0 1411.6,241.6 1403.5,241.6"/><polyline class="g" points="1405.0,183.0 1405.0,240.6"/><polyline class="g" points="1404.5,240.1 1410.6,240.1"/><polygon class="w" points="1403.5,773.6 1411.6,773.6 1411.6,1291.5 1403.5,1291.5"/><polyline class="g" points="1410.1,774.6 1410.1,1290.5"/><polyline class="g" points="1404.5,775.1 1410.6,775.1"/><polygon class="w" points="1132.2,265.2 1262.5,265.2 1262.5,427.3 1132.2,427.3"/><polyline class="g" points="1133.7,266.2 1133.7,426.3"/><polyline class="g" points="1261.0,266.2 1261.0,426.3"/><polygon class="w" points="1281.5,265.2 1411.6,265.2 1411.6,427.3 1281.5,427.3"/><polygon class="w" points="1132.2,1314.0 1262.5,1314.0 1262.5,1400.0 1132.2,1400.0"/><polyline class="g" points="1133.7,1315.0 1133.7,1399.0"/><polyline class="g" points="1261.0,1315.0 1261.0,1399.0"/><polygon class="w" points="1281.5,1314.0 1411.6,1314.0 1411.6,1400.0 1281.5,1400.0"/><polygon class="w" points="1163.6,443.0 1190.0,443.0 1262.4,495.0 1262.4,513.4"/><polygon class="g" points="1168.3,444.5 1189.5,444.5 1260.9,495.8 1260.9,510.5"/><polygon class="w" points="1131.6,477.3 1125.4,490.4 1262.4,589.2 1262.4,570.2"/><polygon class="g" points="1132.2,479.6 1127.3,489.9 1260.9,586.3 1260.9,571.0"/><polygon class="w" points="1131.6,550.7 1125.4,563.8 1262.4,662.6 1262.4,643.6"/><polygon class="g" points="1132.2,553.0 1127.3,563.3 1260.9,659.7 1260.9,644.4"/><polygon class="w" points="1131.6,629.0 1125.4,642.1 1262.4,740.9 1262.4,721.9"/><polygon class="g" points="1132.2,631.3 1127.3,641.6 1260.9,738.0 1260.9,722.7"/><polygon class="w" points="1123.8,701.6 1123.8,719.0 1178.6,758.4 1184.6,745.0"/><polygon class="g" points="1125.3,704.5 1125.3,718.2 1178.0,756.1 1182.7,745.5"/><polygon class="w" points="1380.4,443.0 1354.0,443.0 1281.6,495.0 1281.6,513.4"/><polygon class="g" points="1375.7,444.5 1354.5,444.5 1283.1,495.8 1283.1,510.5"/><polygon class="w" points="1412.4,477.3 1418.6,490.4 1281.6,589.2 1281.6,570.2"/><polygon class="g" points="1411.8,479.6 1416.7,489.9 1283.1,586.3 1283.1,571.0"/><polygon class="w" points="1412.4,550.7 1418.6,563.8 1281.6,662.6 1281.6,643.6"/><polygon class="g" points="1411.8,553.0 1416.7,563.3 1283.1,659.7 1283.1,644.4"/><polygon class="w" points="1412.4,629.0 1418.6,642.1 1281.6,740.9 1281.6,721.9"/><polygon class="g" points="1411.8,631.3 1416.7,641.6 1283.1,738.0 1283.1,722.7"/><polygon class="w" points="1420.2,701.6 1420.2,719.0 1365.4,758.4 1359.4,745.0"/><polygon class="g" points="1418.7,704.5 1418.7,718.2 1366.0,756.1 1361.3,745.5"/>
<polygon class="w" points="1553.2,182.0 1561.5,182.0 1561.5,241.6 1553.2,241.6"/><polyline class="g" points="1560.0,183.0 1560.0,240.6"/><polyline class="g" points="1554.2,240.1 1560.5,240.1"/><polygon class="w" points="1553.2,773.6 1561.5,773.6 1561.5,1291.5 1553.2,1291.5"/><polyline class="g" points="1560.0,774.6 1560.0,1290.5"/><polyline class="g" points="1554.2,775.1 1560.5,775.1"/><polygon class="w" points="1669.8,182.0 1683.6,182.0 1683.6,241.6 1669.8,241.6"/><polyline class="g" points="1671.3,183.0 1671.3,240.6"/><polyline class="g" points="1670.8,240.1 1682.6,240.1"/><polygon class="w" points="1669.8,773.6 1683.6,773.6 1683.6,1291.5 1669.8,1291.5"/><polyline class="g" points="1671.3,774.6 1671.3,1290.5"/><polyline class="g" points="1670.8,775.1 1682.6,775.1"/><polygon class="w" points="1702.5,182.0 1716.5,182.0 1716.5,241.6 1702.5,241.6"/><polyline class="g" points="1704.0,183.0 1704.0,240.6"/><polyline class="g" points="1703.5,240.1 1715.5,240.1"/><polygon class="w" points="1702.5,773.6 1716.5,773.6 1716.5,1291.5 1702.5,1291.5"/><polyline class="g" points="1703.5,775.1 1715.5,775.1"/><polygon class="w" points="1824.5,182.0 1832.6,182.0 1832.6,241.6 1824.5,241.6"/><polyline class="g" points="1831.1,183.0 1831.1,240.6"/><polyline class="g" points="1825.5,240.1 1831.6,240.1"/><polygon class="w" points="1824.5,773.6 1832.6,773.6 1832.6,1291.5 1824.5,1291.5"/><polyline class="g" points="1831.1,774.6 1831.1,1290.5"/><polyline class="g" points="1825.5,775.1 1831.6,775.1"/><polygon class="w" points="1553.2,265.2 1683.5,265.2 1683.5,427.3 1553.2,427.3"/><polygon class="w" points="1702.5,265.2 1832.6,265.2 1832.6,427.3 1702.5,427.3"/><polyline class="g" points="1704.0,266.2 1704.0,426.3"/><polyline class="g" points="1831.1,266.2 1831.1,426.3"/><polygon class="w" points="1553.2,1314.0 1683.5,1314.0 1683.5,1400.0 1553.2,1400.0"/><polygon class="w" points="1702.5,1314.0 1832.6,1314.0 1832.6,1400.0 1702.5,1400.0"/><polyline class="g" points="1704.0,1315.0 1704.0,1399.0"/><polyline class="g" points="1831.1,1315.0 1831.1,1399.0"/><polygon class="w" points="1584.6,443.0 1611.0,443.0 1683.4,495.0 1683.4,513.4"/><polygon class="g" points="1589.3,444.5 1610.5,444.5 1681.9,495.8 1681.9,510.5"/><polygon class="w" points="1552.6,477.3 1546.4,490.4 1683.4,589.2 1683.4,570.2"/><polygon class="g" points="1553.2,479.6 1548.3,489.9 1681.9,586.3 1681.9,571.0"/><polygon class="w" points="1552.6,550.7 1546.4,563.8 1683.4,662.6 1683.4,643.6"/><polygon class="g" points="1553.2,553.0 1548.3,563.3 1681.9,659.7 1681.9,644.4"/><polygon class="w" points="1552.6,629.0 1546.4,642.1 1683.4,740.9 1683.4,721.9"/><polygon class="g" points="1553.2,631.3 1548.3,641.6 1681.9,738.0 1681.9,722.7"/><polygon class="w" points="1544.8,701.6 1544.8,719.0 1599.6,758.4 1605.6,745.0"/><polygon class="g" points="1546.3,704.5 1546.3,718.2 1599.0,756.1 1603.7,745.5"/><polygon class="w" points="1801.4,443.0 1775.0,443.0 1702.6,495.0 1702.6,513.4"/><polygon class="g" points="1796.7,444.5 1775.5,444.5 1704.1,495.8 1704.1,510.5"/><polygon class="w" points="1833.4,477.3 1839.6,490.4 1702.6,589.2 1702.6,570.2"/><polygon class="g" points="1832.8,479.6 1837.7,489.9 1704.1,586.3 1704.1,571.0"/><polygon class="w" points="1833.4,550.7 1839.6,563.8 1702.6,662.6 1702.6,643.6"/><polygon class="g" points="1832.8,553.0 1837.7,563.3 1704.1,659.7 1704.1,644.4"/><polygon class="w" points="1833.4,629.0 1839.6,642.1 1702.6,740.9 1702.6,721.9"/><polygon class="g" points="1832.8,631.3 1837.7,641.6 1704.1,738.0 1704.1,722.7"/><polygon class="w" points="1841.2,701.6 1841.2,719.0 1786.4,758.4 1780.4,745.0"/><polygon class="g" points="1839.7,704.5 1839.7,718.2 1787.0,756.1 1782.3,745.5"/>
<polyline class="b" points="781.0,1377.0 1288.0,777.0 1258.0,777.0 1260.0,734.0 1284.0,734.0 1284.0,657.0 1260.0,657.0 1260.0,581.0 1284.0,581.0 1284.0,505.0 1260.0,505.0 1197.0,427.0 1281.5,347.0 1288.0,240.5 1256.0,240.5 1136.0,211.6 1090.0,343.0 1046.0,363.6 1028.0,411.5 1090.0,411.5 988.0,347.0 940.0,440.0"/>
<polyline class="b" points="960.0,470.0 992.0,485.0 992.0,558.5 992.0,637.5 996.5,731.0 986.0,776.0 960.0,800.0"/>
<polyline class="b" points="940.0,214.0 982.5,212.0"/>
<polyline class="b" points="940.0,741.0 1124.0,712.0 1136.0,777.0 1362.0,753.0 1408.0,777.0 1556.0,777.5 1572.0,739.0 1615.0,691.0 1680.0,656.0 1705.0,656.0 1705.0,581.0 1681.0,581.0 1681.0,505.0 1705.0,505.0 1767.0,428.0 1682.0,347.0 1680.0,240.5 1710.0,240.5 1828.0,211.6 1827.0,209.3 1561.0,209.3 1557.0,211.6 1515.0,343.0 1472.0,363.6 1452.0,411.5 1515.0,411.5 1408.0,211.6 1768.0,677.0 1812.0,723.0 1828.0,777.0 1712.0,777.0 1680.0,777.0 1618.0,1314.0 1681.0,1377.0"/>
<text class="l" x="1290.5" y="775.5">S1</text>
<text class="l" x="1260.5" y="775.5">S2</text>
<text class="l" x="1262.5" y="732.5">S3</text>
<text class="l" x="1282.5" y="732.5">S4</text>
<text class="l" x="1282.5" y="655.5">S5</text>
<text class="l" x="1262.5" y="655.5">S6</text>
<text class="l" x="1262.5" y="579.5">S7</text>
<text class="l" x="1282.5" y="579.5">S8</text>
<text class="l" x="1282.5" y="503.5">S9</text>
<text class="l" x="1262.5" y="503.5">S10</text>
<text class="l" x="1199.5" y="425.5">S11</text>
<text class="l" x="1284.0" y="345.5">S12</text>
<text class="l" x="1290.5" y="239.0">S13</text>
<text class="l" x="1258.5" y="239.0">S14</text>
<text class="l" x="1138.5" y="210.1">S15</text>
<text class="l" x="1092.5" y="341.5">S16</text>
<text class="l" x="1048.5" y="362.1">S17</text>
<text class="l" x="1030.5" y="410.0">S18</text>
<text class="l" x="1092.5" y="410.0">S19</text>
<text class="l" x="990.5" y="345.5">S20</text>
<text class="l" x="994.5" y="483.5">S22</text>
<text class="l" x="994.5" y="557.0">S23</text>
<text class="l" x="994.5" y="636.0">S24</text>
<text class="l" x="1001.0" y="709.5">S25</text>
<text class="l" x="988.5" y="774.5">S26</text>
<text class="l" x="985.0" y="210.5">S36</text>
<text class="l" x="1126.5" y="710.5">S40</text>
<text class="l" x="1138.5" y="775.5">S41</text>
<text class="l" x="1364.5" y="751.5">S42</text>
<text class="l" x="1410.5" y="775.5">S43</text>
<text class="l" x="1558.5" y="776.0">S44</text>
<text class="l" x="1574.5" y="737.5">S45</text>
<text class="l" x="1617.5" y="689.5">S46</text>
<text class="l" x="1682.5" y="654.5">S47</text>
<text class="l" x="1703.5" y="654.5">S48</text>
<text class="l" x="1703.5" y="579.5">S49</text>
<text class="l" x="1683.5" y="579.5">S50</text>
<text class="l" x="1683.5" y="503.5">S51</text>
<text class="l" x="1703.5" y="503.5">S52</text>
<text class="l" x="1769.5" y="426.5">S53</text>
<text class="l" x="1684.5" y="345.5">S54</text>
<text class="l" x="1682.5" y="239.0">S55</text>
<text class="l" x="1712.5" y="239.0">S56</text>
<text class="l" x="1830.5" y="210.1">S57</text>
<text class="l" x="1559.5" y="210.1">S58</text>
<text class="l" x="1517.5" y="341.5">S59</text>
<text class="l" x="1474.5" y="362.1">S60</text>
<text class="l" x="1454.5" y="410.0">S61</text>
<text class="l" x="1517.5" y="410.0">S62</text>
<text class="l" x="1410.5" y="210.1">S63</text>
<text class="l" x="1770.5" y="675.5">S64</text>
<text class="l" x="1814.5" y="721.5">S65</text>
<text class="l" x="1830.5" y="775.5">S66</text>
<text class="l" x="1714.5" y="775.5">S67</text>
<text class="l" x="1682.5" y="775.5">S68</text>
<text class="l" x="1620.5" y="1312.5">S69</text>
</svg>
<div style="position:absolute;left:0.00px;top:1152.00px;width:38.00px;height:224.00px;background:#ececec"></div>
<div style="position:absolute;left:37.00px;top:1152.00px;width:1.20px;height:224.00px;background:#a9a9a9"></div>
<div style="position:absolute;left:38.00px;top:1152.00px;width:455.50px;height:223.00px;background:linear-gradient(#cdcdcd 0,#e3e3e3 28px,#f4f4f4 60px,#fff 100px)"></div>
<div style="position:absolute;left:0.00px;top:1375.00px;width:496.00px;height:2.00px;background:#b5b5b5"></div>
<div style="position:absolute;left:493.40px;top:1152.00px;width:2.20px;height:225.00px;background:#959595"></div>
<div style="position:absolute;left:495.60px;top:1152.00px;width:5.40px;height:225.00px;background:linear-gradient(90deg,#cfcfcf,#e6e6e6 50%,#d4d4d4)"></div>
<svg style="position:absolute;left:0;top:1150px" width="38" height="140" viewBox="0 1150 38 140"><path d="M10 1151l5 4 5-4" fill="none" stroke="#444" stroke-width="2"/><rect x="5.500" y="1165.500" width="15" height="14" fill="#eef3f8" stroke="#7d93b5" stroke-width="1.200"/><path d="M8 1169h10M8 1172h10M8 1175h10" stroke="#6bb85a" stroke-width="1.400"/><text x="19" y="1185" font-family="Liberation Sans,sans-serif" font-size="10" font-weight="bold" fill="#111">G</text><rect x="5.500" y="1193.500" width="16" height="12" fill="#eef3f8" stroke="#7d93b5" stroke-width="1.200"/><path d="M8 1197h11M8 1200h11" stroke="#6bb85a" stroke-width="1.400"/><rect x="13.500" y="1202.500" width="11.500" height="10" fill="#dfe7f1" stroke="#5b6c84" stroke-width="1"/><path d="M15.500 1204.500c2 0 3 6 6 6M21.500 1204.500c-2.500 1-3.500 4.500-6 6" fill="none" stroke="#111" stroke-width="1.300"/><path d="M5.500 1223v14l3 4 3-4v-14z" fill="#5b6570" stroke="#2d343c" stroke-width="1"/><path d="M6 1228l5-3M6 1233l5-3" stroke="#c9d2da" stroke-width="1.200"/><path d="M8 1240l15-14M17 1225.500h7v7" fill="none" stroke="#111" stroke-width="2.400"/><rect x="5.500" y="1262.500" width="20" height="16" fill="#e8f0fa" stroke="#3f6fb5" stroke-width="1.300"/><path d="M5.500 1267.800h20M5.500 1273.200h20M12.200 1262.500v16M18.900 1262.500v16" stroke="#3f6fb5" stroke-width="1.300"/></svg>
<div style="position:absolute;left:0.00px;top:1377.00px;width:2500.00px;height:30.00px;background:#f0f0f0"></div>
<span class="t" style="left:3.00px;top:1385.63px;font-size:15.80px;letter-spacing:-0.525px;color:#1a1a1a;">Cut distance 1804.8234 in , 95 Pierces, Time 26m 33.33s</span>
<div style="position:absolute;left:1541.00px;top:1380.00px;width:1.00px;height:25.00px;background:#d6d6d6"></div>
<span class="t" style="left:1547.00px;top:1385.63px;font-size:15.80px;letter-spacing:-0.564px;color:#1a1a1a;">-3.4873 in, 43.7426 in</span>
<div style="position:absolute;left:1776.00px;top:1380.00px;width:1.00px;height:25.00px;background:#e2e2e2"></div>
<span class="t" style="left:1784.00px;top:1385.63px;font-size:15.80px;letter-spacing:-1.288px;color:#1a1a1a;">Pos X</span>
<div style="position:absolute;left:1826.00px;top:1380.00px;width:139.00px;height:24.00px;background:#fff;border-bottom:1.3px solid #8a8a8a;border-radius:3px;box-sizing:border-box"></div>
<div style="position:absolute;left:1990.00px;top:1380.00px;width:139.00px;height:24.00px;background:#fff;border-bottom:1.3px solid #8a8a8a;border-radius:3px;box-sizing:border-box"></div>
<div style="position:absolute;left:2154.00px;top:1380.00px;width:139.00px;height:24.00px;background:#fff;border-bottom:1.3px solid #8a8a8a;border-radius:3px;box-sizing:border-box"></div>
<span class="t" style="left:1832.00px;top:1385.63px;font-size:15.80px;letter-spacing:-0.158px;color:#1a1a1a;">0 in</span>
<span class="t" style="left:1977.00px;top:1385.63px;font-size:15.80px;color:#1a1a1a;">Y</span>
<span class="t" style="left:1996.00px;top:1385.63px;font-size:15.80px;letter-spacing:-0.158px;color:#1a1a1a;">0 in</span>
<span class="t" style="left:2140.00px;top:1385.63px;font-size:15.80px;color:#1a1a1a;">A</span>
<span class="t" style="left:2160.00px;top:1385.63px;font-size:15.80px;letter-spacing:-0.659px;color:#1a1a1a;">0 degrees</span>
<span class="t" style="left:2305.00px;top:1385.63px;font-size:15.80px;letter-spacing:-0.024px;color:#1a1a1a;">Mirror X</span>
<div style="position:absolute;left:2363.00px;top:1385.00px;width:15.00px;height:15.00px;border:1.2px solid #555;border-radius:3px;box-sizing:border-box;background:#f6f6f6"></div>
<span class="t" style="left:2391.00px;top:1385.63px;font-size:15.80px;color:#1a1a1a;">Y</span>
<div style="position:absolute;left:2402.00px;top:1385.00px;width:15.00px;height:15.00px;border:1.2px solid #555;border-radius:3px;box-sizing:border-box;background:#f6f6f6"></div>
<div style="position:absolute;left:2433.00px;top:1380.00px;width:1.00px;height:25.00px;background:#d6d6d6"></div>
<div style="position:absolute;left:0;top:115.5px;width:979px;height:1035.8px;border-radius:0 9px 9px 0;overflow:hidden;background:#f2f2f2;box-shadow:0 8px 28px rgba(0,0,0,.30),0 0 12px rgba(0,0,0,.14)">
<div style="position:absolute;left:0.00px;top:0.00px;width:979.00px;height:40.50px;background:linear-gradient(#f5f4f9,#f2f2f6)"></div>
<div style="position:absolute;left:0.00px;top:40.50px;width:979.00px;height:52.00px;background:#f3f3f3"></div>
<div style="position:absolute;left:0.00px;top:92.30px;width:979.00px;height:2.00px;background:#111"></div>
<div style="position:absolute;left:0.00px;top:94.30px;width:957.00px;height:950.00px;background:#ababab"></div>
<div style="position:absolute;left:957.00px;top:94.30px;width:22.00px;height:950.00px;background:#f0f0f0"></div>
<div style="position:absolute;left:967.40px;top:116.50px;width:2.60px;height:808.00px;background:#8b8b8b;border-radius:1.300px"></div>
<div style="position:absolute;left:820.20px;top:112.50px;width:5.40px;height:930.00px;background:#000"></div>
<div style="position:absolute;left:95.00px;top:106.10px;width:725.40px;height:940.00px;background:#fff;border-left:1.5px solid #000;border-top:1.8px solid #000;box-sizing:border-box"></div>
</div>
<svg style="position:absolute;left:949px;top:126px" width="18" height="18" viewBox="0 0 18 18"><path d="M2.500 2.500l12.500 12.500M15 2.500L2.500 15" stroke="#1a1a1a" stroke-width="1.5" fill="none"/></svg>
<div style="position:absolute;left:8.40px;top:168.40px;width:93.60px;height:27.00px;background:#fdfdfd;border:1px solid #d2d2d2;border-bottom-color:#bdbdbd;border-radius:5px;box-sizing:border-box;"></div>
<span class="t" style="left:39.40px;top:174.06px;font-size:16.00px;letter-spacing:-1.823px;color:#1a1a1a;">Save</span>
<div style="position:absolute;left:119.40px;top:163.60px;width:37.20px;height:37.80px;background:#fdfdfd;border:1px solid #d2d2d2;border-bottom-color:#bdbdbd;border-radius:5px;box-sizing:border-box;"></div>
<svg style="position:absolute;left:122.0px;top:166.5px;overflow:visible" width="32" height="32" viewBox="-16 -16 32 32"><defs><linearGradient id="ga" x1="0" y1="0" x2="0" y2="1"><stop offset="0" stop-color="#b5e86a"/><stop offset="1" stop-color="#5fae1c"/></linearGradient></defs><g transform="translate(3,0) scale(-1,1)"><path d="M-9.5 -5.500 H-0.5 V-10.5 L10.5 0 L-0.5 10.5 V5.500 H-9.5 Z" fill="url(#ga)" stroke="#357a0e" stroke-width="1.5"/></g><rect x="-13" y="-10.5" width="4.500" height="21" fill="#8fd242" stroke="#3f8a12" stroke-width="1.2"/></svg>
<div style="position:absolute;left:167.60px;top:163.60px;width:37.40px;height:37.80px;background:#fdfdfd;border:1px solid #d2d2d2;border-bottom-color:#bdbdbd;border-radius:5px;box-sizing:border-box;"></div>
<svg style="position:absolute;left:170.3px;top:166.5px;overflow:visible" width="32" height="32" viewBox="-16 -16 32 32"><defs><linearGradient id="ga" x1="0" y1="0" x2="0" y2="1"><stop offset="0" stop-color="#b5e86a"/><stop offset="1" stop-color="#5fae1c"/></linearGradient></defs><g transform="scale(-1,1)"><path d="M-9.5 -5.500 H-0.5 V-10.5 L10.5 0 L-0.5 10.5 V5.500 H-9.5 Z" fill="url(#ga)" stroke="#357a0e" stroke-width="1.5"/></g></svg>
<div style="position:absolute;left:317.60px;top:163.60px;width:37.00px;height:37.80px;background:#fdfdfd;border:1px solid #d2d2d2;border-bottom-color:#bdbdbd;border-radius:5px;box-sizing:border-box;"></div>
<svg style="position:absolute;left:320.1px;top:166.5px;overflow:visible" width="32" height="32" viewBox="-16 -16 32 32"><defs><linearGradient id="ga" x1="0" y1="0" x2="0" y2="1"><stop offset="0" stop-color="#b5e86a"/><stop offset="1" stop-color="#5fae1c"/></linearGradient></defs><path d="M-9.5 -5.500 H-0.5 V-10.5 L10.5 0 L-0.5 10.5 V5.500 H-9.5 Z" fill="url(#ga)" stroke="#357a0e" stroke-width="1.5"/></svg>
<div style="position:absolute;left:365.60px;top:163.60px;width:37.20px;height:37.80px;background:#fdfdfd;border:1px solid #d2d2d2;border-bottom-color:#bdbdbd;border-radius:5px;box-sizing:border-box;"></div>
<svg style="position:absolute;left:368.2px;top:166.5px;overflow:visible" width="32" height="32" viewBox="-16 -16 32 32"><defs><linearGradient id="ga" x1="0" y1="0" x2="0" y2="1"><stop offset="0" stop-color="#b5e86a"/><stop offset="1" stop-color="#5fae1c"/></linearGradient></defs><g transform="translate(-3,0)"><path d="M-9.5 -5.500 H-0.5 V-10.5 L10.5 0 L-0.5 10.5 V5.500 H-9.5 Z" fill="url(#ga)" stroke="#357a0e" stroke-width="1.5"/></g><rect x="8.500" y="-10.5" width="4.500" height="21" fill="#8fd242" stroke="#3f8a12" stroke-width="1.2"/></svg>
<div style="position:absolute;left:426.60px;top:163.60px;width:37.00px;height:37.80px;background:#fdfdfd;border:1px solid #d2d2d2;border-bottom-color:#bdbdbd;border-radius:5px;box-sizing:border-box;"></div>
<svg style="position:absolute;left:429.1px;top:166.5px;overflow:visible" width="32" height="32" viewBox="-16 -16 32 32"><defs><linearGradient id="ga" x1="0" y1="0" x2="0" y2="1"><stop offset="0" stop-color="#b5e86a"/><stop offset="1" stop-color="#5fae1c"/></linearGradient></defs><rect x="-8.500" y="-2" width="17" height="4" rx="1.800" fill="#a9c8ec" stroke="#3f74b8" stroke-width="1.3"/></svg>
<div style="position:absolute;left:572.00px;top:163.60px;width:38.00px;height:37.80px;background:#fdfdfd;border:1px solid #d2d2d2;border-bottom-color:#bdbdbd;border-radius:5px;box-sizing:border-box;"></div>
<svg style="position:absolute;left:575.0px;top:166.5px;overflow:visible" width="32" height="32" viewBox="-16 -16 32 32"><defs><linearGradient id="ga" x1="0" y1="0" x2="0" y2="1"><stop offset="0" stop-color="#b5e86a"/><stop offset="1" stop-color="#5fae1c"/></linearGradient></defs><path d="M-2 -9h4v7h7v4h-7v7h-4v-7h-7v-4h7z" fill="#a9c8ec" stroke="#3f74b8" stroke-width="1.3" stroke-linejoin="round"/></svg>
<div style="position:absolute;left:215.00px;top:168.00px;width:36.00px;height:28.00px;background:#fff;border-bottom:1.4px solid #8a8a8a;border-radius:3px;box-sizing:border-box"></div>
<span class="t" style="left:222.00px;top:173.28px;font-size:15.50px;color:#1a1a1a;">2</span>
<div style="position:absolute;left:473.00px;top:168.00px;width:90.00px;height:28.00px;background:#fbfbfb;border:1px solid #d4d4d4;border-bottom-color:#bdbdbd;border-radius:4px;box-sizing:border-box"></div>
<span class="t" style="left:478.00px;top:174.26px;font-size:16.00px;letter-spacing:-1.511px;color:#1a1a1a;">70%</span>
<svg style="position:absolute;left:545px;top:177px" width="14" height="10" viewBox="0 0 14 10"><path d="M2 2.500l5 5 5-5" stroke="#444" stroke-width="1.3" fill="none"/></svg>
<div style="position:absolute;left:766.00px;top:168.20px;width:95.00px;height:27.40px;background:#fdfdfd;border:2px solid #3e7cbc;border-radius:5.500px;box-sizing:border-box"></div>
<span class="t" style="left:794.80px;top:173.86px;font-size:16.00px;letter-spacing:-0.851px;color:#1a1a1a;">Close</span>
<div style="position:absolute;left:877.40px;top:168.40px;width:92.60px;height:27.00px;background:#fdfdfd;border:1px solid #d2d2d2;border-bottom-color:#bdbdbd;border-radius:5px;box-sizing:border-box;"></div>
<span class="t" style="left:886.00px;top:173.86px;font-size:16.00px;letter-spacing:-0.902px;color:#1a1a1a;">Page Setup</span>
<span class="t" style="left:107.00px;top:234.10px;font-size:14.30px;letter-spacing:-0.542px;color:#111;">SVG.job</span>
<span class="t" style="left:107.00px;top:273.90px;font-size:14.30px;letter-spacing:0.252px;font-weight:bold;color:#111;">Report created: 21/09/2023 07:19:28</span>
<span class="t" style="left:431.00px;top:313.65px;font-size:20.50px;letter-spacing:0.216px;font-weight:bold;color:#111;">Tools</span>
<div style="position:absolute;left:107.50px;top:357.50px;width:701.00px;height:134.00px;box-sizing:border-box;border:1.5px solid #b9b9b9;border-right-color:#5a5a5a;border-bottom-color:#3c3c3c;box-shadow:inset 1px 1px 0 #e6e6e6"></div>
<span class="t" style="left:110.00px;top:381.50px;font-size:14.30px;letter-spacing:0.136px;color:#111;">Tool 1: 45A 10G Fine Mild</span>
<span class="t" style="left:116.00px;top:426.10px;font-size:14.30px;letter-spacing:-0.330px;color:#111;">Type: Plasma</span>
<div style="position:absolute;left:457.00px;top:402.00px;width:1.20px;height:43.00px;background:#b5b5b5"></div>
<span class="t" style="left:461.00px;top:426.10px;font-size:14.30px;letter-spacing:0.031px;color:#111;">Kerf width: 0.051 in</span>
<span class="t" style="left:116.00px;top:469.90px;font-size:14.30px;letter-spacing:-0.065px;color:#111;">Notes:</span>
<span class="t" style="left:437.00px;top:554.65px;font-size:20.50px;letter-spacing:-0.570px;font-weight:bold;color:#111;">Parts</span>
<span class="t" style="left:107.00px;top:599.30px;font-size:14.30px;letter-spacing:-0.504px;color:#111;">Part: GATE PANEL WO FRAME SVG</span>
<span class="t" style="left:107.00px;top:637.10px;font-size:14.30px;letter-spacing:0.169px;color:#111;">Number of parts cut: 1</span>
<div style="position:absolute;left:107.50px;top:694.00px;width:701.00px;height:222.80px;box-sizing:border-box;border:1.5px solid #b9b9b9;border-right-color:#5a5a5a;border-bottom-color:#3c3c3c;box-shadow:inset 1px 1px 0 #e6e6e6"></div>
<span class="t" style="left:116.00px;top:718.90px;font-size:14.30px;letter-spacing:-0.033px;color:#111;">Outside Offset, black, T1: 45A 10G Fine Mild</span>
<span class="t" style="left:116.00px;top:762.90px;font-size:14.30px;letter-spacing:-0.045px;color:#111;">Tool: T1: 45A 10G Fine Mild</span>
<span class="t" style="left:116.00px;top:806.90px;font-size:14.30px;letter-spacing:-0.129px;color:#111;">Feed rate: 90 ipm</span>
<span class="t" style="left:341.00px;top:806.90px;font-size:14.30px;letter-spacing:-0.069px;color:#111;">Lead in: 0.125 in Arc</span>
<span class="t" style="left:576.00px;top:806.90px;font-size:14.30px;letter-spacing:-0.006px;color:#111;">Lead out: 0.125 in Arc</span>
<div style="position:absolute;left:109.00px;top:826.00px;width:698.00px;height:1.20px;background:#b5b5b5"></div>
<span class="t" style="left:116.00px;top:850.30px;font-size:14.30px;letter-spacing:0.022px;color:#111;">Operation time:30m 59.74s</span>
<span class="t" style="left:341.00px;top:850.30px;font-size:14.30px;letter-spacing:0.116px;color:#111;">Number of pierces: 95</span>
<span class="t" style="left:576.00px;top:850.30px;font-size:14.30px;letter-spacing:-0.048px;color:#111;">Cut distance:1813.3734 in</span>
<span class="t" style="left:116.00px;top:894.30px;font-size:14.30px;letter-spacing:-0.065px;color:#111;">Notes:</span>
<span class="t" style="left:107.00px;top:976.70px;font-size:14.30px;letter-spacing:-0.164px;color:#111;">Summary:</span>
<span class="t" style="left:107.00px;top:1014.90px;font-size:14.30px;letter-spacing:0.043px;color:#111;">Job width: 48.0506 in</span>
<span class="t" style="left:107.00px;top:1033.50px;font-size:14.30px;letter-spacing:0.013px;color:#111;">Job height: 51.1306 in</span>
<span class="t" style="left:107.00px;top:1056.90px;font-size:14.30px;letter-spacing:-0.217px;color:#111;">Job area: 2456.856 in</span>
<span class="t" style="left:242.50px;top:1055.38px;font-size:9.00px;color:#111;">2</span>
<span class="t" style="left:107.00px;top:1094.90px;font-size:14.30px;letter-spacing:0.137px;color:#111;">Number of tool changes: 1</span>
<span class="t" style="left:107.00px;top:1114.30px;font-size:14.30px;letter-spacing:0.061px;color:#111;">Total cut distance: 1813.3734 in</span>
<span class="t" style="left:107.00px;top:1134.10px;font-size:14.30px;letter-spacing:0.084px;color:#111;">Total cut time: 21m 19.22s</span>
</body></html>
